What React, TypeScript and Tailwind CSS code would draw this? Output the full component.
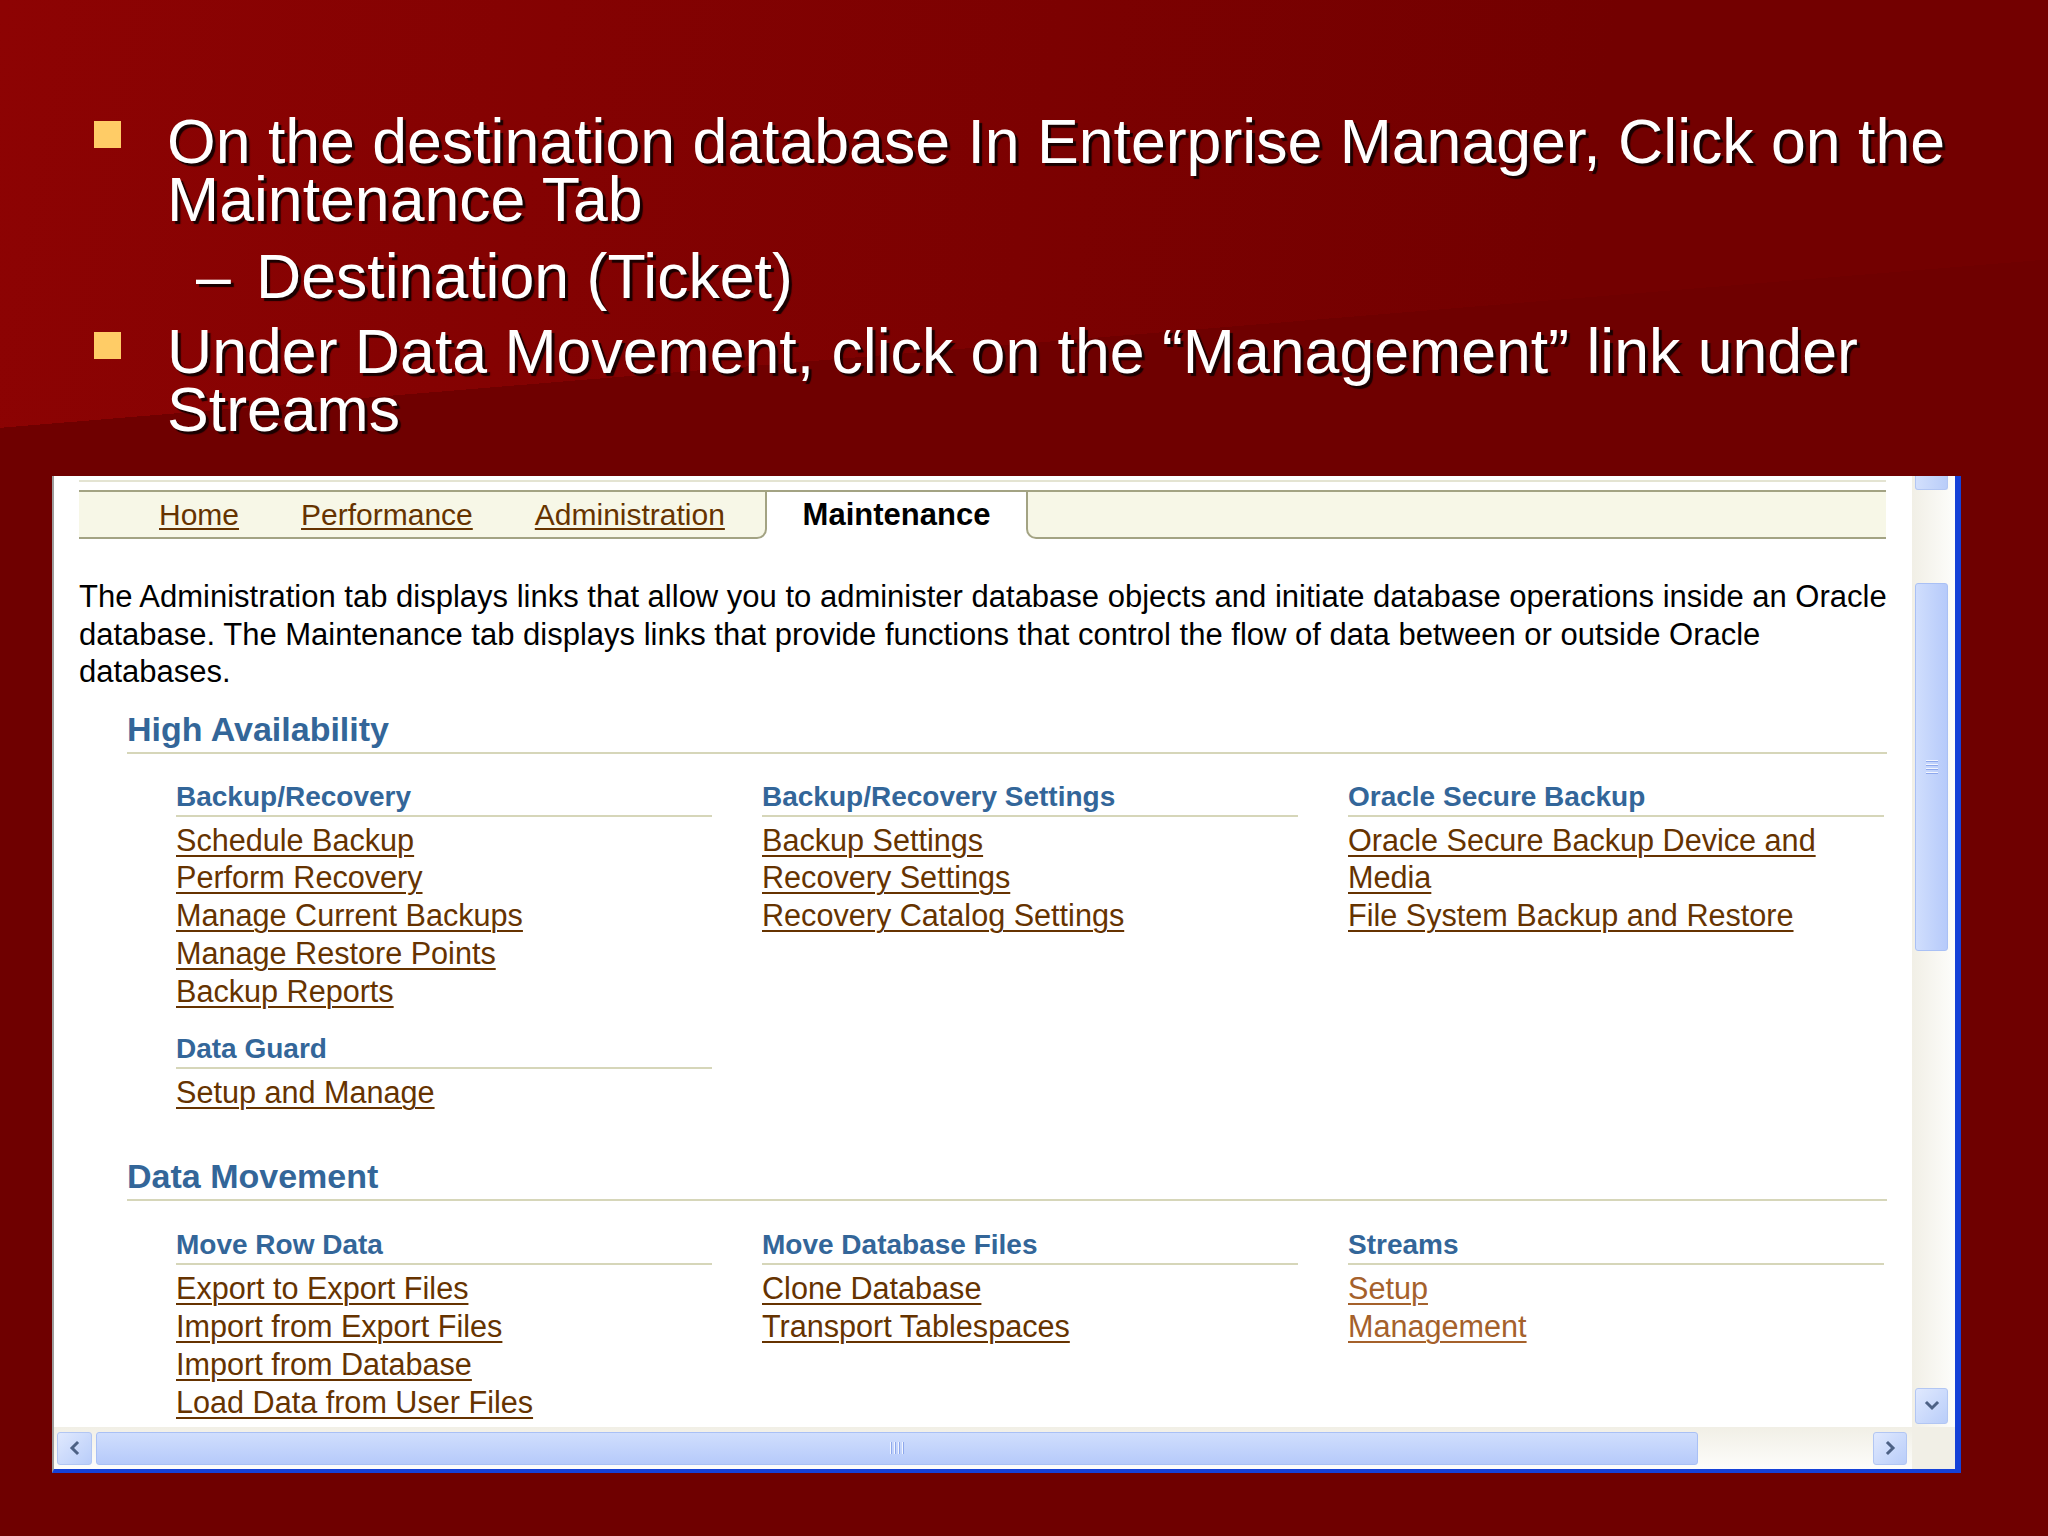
import React from 'react';

function Chevron({ dir }: { dir: 'up' | 'down' | 'left' | 'right' }) {
  const pts = {
    up: '3,10 8,5 13,10',
    down: '3,5 8,10 13,5',
    left: '10,3 5,8 10,13',
    right: '6,3 11,8 6,13',
  }[dir];
  return (
    <svg width="16" height="16" viewBox="0 0 16 16">
      <polyline points={pts} fill="none" stroke="#4d6185" strokeWidth="3" strokeLinecap="square" />
    </svg>
  );
}

function Lnk({ children, visited = false }: { children: React.ReactNode; visited?: boolean }) {
  return (
    <a
      href="#"
      className={`block w-fit underline decoration-2 underline-offset-[4px] ${visited ? 'text-[#a5612b]' : 'text-[#663300]'}`}
    >
      {children}
    </a>
  );
}

function Group({ title, children, className = '' }: { title: string; children: React.ReactNode; className?: string }) {
  return (
    <div className={`w-[536px] ${className}`}>
      <div className="text-[28px] leading-[28px] font-bold text-[#336699]">{title}</div>
      <div className="mt-[4px] h-[2px] bg-[#d6d6b9]" />
      <div className="mt-[5px] text-[30.6px] leading-[37.8px]">{children}</div>
    </div>
  );
}

function Section({ title, children, className = '' }: { title: string; children: React.ReactNode; className?: string }) {
  return (
    <div className={`ml-[73px] w-[1760px] ${className}`}>
      <div className="text-[34px] leading-[34px] font-bold text-[#336699]">{title}</div>
      <div className="mt-[6px] h-[2px] bg-[#d6d6b9]" />
      <div className="ml-[49px] flex gap-[50px] items-start">{children}</div>
    </div>
  );
}

function ThumbGrip({ vertical }: { vertical: boolean }) {
  return (
    <div className={vertical ? 'flex flex-col gap-[2px]' : 'flex gap-[2px]'}>
      {[0, 1, 2, 3].map((i) => (
        <div
          key={i}
          className={vertical ? 'w-[12px] h-[2px] bg-[#f2f5fe] border-b border-[#8ea8ec]' : 'w-[2px] h-[12px] bg-[#f2f5fe] border-r border-[#8ea8ec]'}
        />
      ))}
    </div>
  );
}

export default function App() {
  return (
    <div className="w-[2048px] h-[1536px] overflow-hidden bg-[#700000] bg-[linear-gradient(175.3deg,transparent_25.1%,#6f0000_25.1%),linear-gradient(100deg,#8d0303,#730000_70%)] font-['Liberation_Sans',Arial,sans-serif]">
      {/* slide bullets */}
      <div className="pt-[112px] pl-[94px] text-white text-[62.6px] leading-[58px] [text-shadow:3px_3px_1px_#1a0000]">
        <div className="flex">
          <div className="w-[27px] h-[27px] mt-[9px] bg-[#ffcc66] shrink-0" />
          <div className="ml-[46px] whitespace-nowrap">
            On the destination database In Enterprise Manager, Click on the
            <br />
            Maintenance Tab
          </div>
        </div>
        <div className="mt-[19px] flex pl-[102px] whitespace-nowrap">
          <span className="w-[60px]">–</span>
          <span>Destination (Ticket)</span>
        </div>
        <div className="mt-[17px] flex">
          <div className="w-[27px] h-[27px] mt-[10px] bg-[#ffcc66] shrink-0" />
          <div className="ml-[46px] whitespace-nowrap">
            Under Data Movement, click on the “Management” link under
            <br />
            Streams
          </div>
        </div>
      </div>

      {/* browser screenshot */}
      <div className="mt-[38px] ml-[52px] w-[1909px] h-[997px] bg-white border-l-2 border-l-[#9d9d9d] border-r-[6px] border-r-[#1541d8] border-b-4 border-b-[#1541d8] flex flex-col">
        <div className="h-[951px] flex">
          {/* page content */}
          <div className="w-[1858px] h-[951px] overflow-hidden">
            <div className="mt-[4px] ml-[25px] w-[1807px] h-[2px] bg-[#e4e4d2]" />
            <div className="mt-[8px] ml-[25px] w-[1807px] h-[49px] flex text-[30px]">
              <div className="w-[688px] shrink-0 bg-[#f7f7e7] border-t-2 border-b-2 border-r-2 border-[#a3a383] rounded-br-[10px] flex items-center pl-[80px] gap-[62px]">
                <a href="#" className="underline decoration-2 underline-offset-[3px] text-[#663300]">Home</a>
                <a href="#" className="underline decoration-2 underline-offset-[3px] text-[#663300]">Performance</a>
                <a href="#" className="underline decoration-2 underline-offset-[3px] text-[#663300]">Administration</a>
              </div>
              <div className="w-[259px] shrink-0 bg-white border-t-2 border-[#a3a383] flex items-center justify-center font-bold text-black text-[31px]">
                Maintenance
              </div>
              <div className="flex-1 bg-[#f7f7e7] border-t-2 border-b-2 border-l-2 border-[#a3a383] rounded-bl-[10px]" />
            </div>

            <div className="mt-[39px] ml-[25px] text-[31px] leading-[37.5px] text-black whitespace-nowrap">
              The Administration tab displays links that allow you to administer database objects and initiate database operations inside an Oracle
              <br />
              database. The Maintenance tab displays links that provide functions that control the flow of data between or outside Oracle
              <br />
              databases.
            </div>

            <Section title="High Availability" className="mt-[21px]">
              <div className="mt-[29px]">
                <Group title="Backup/Recovery">
                  <Lnk>Schedule Backup</Lnk>
                  <Lnk>Perform Recovery</Lnk>
                  <Lnk>Manage Current Backups</Lnk>
                  <Lnk>Manage Restore Points</Lnk>
                  <Lnk>Backup Reports</Lnk>
                </Group>
                <Group title="Data Guard" className="mt-[25px]">
                  <Lnk>Setup and Manage</Lnk>
                </Group>
              </div>
              <Group title="Backup/Recovery Settings" className="mt-[29px]">
                <Lnk>Backup Settings</Lnk>
                <Lnk>Recovery Settings</Lnk>
                <Lnk>Recovery Catalog Settings</Lnk>
              </Group>
              <Group title="Oracle Secure Backup" className="mt-[29px]">
                <Lnk>
                  Oracle Secure Backup Device and
                  <br />
                  Media
                </Lnk>
                <Lnk>File System Backup and Restore</Lnk>
              </Group>
            </Section>

            <Section title="Data Movement" className="mt-[47px]">
              <Group title="Move Row Data" className="mt-[30px]">
                <Lnk>Export to Export Files</Lnk>
                <Lnk>Import from Export Files</Lnk>
                <Lnk>Import from Database</Lnk>
                <Lnk>Load Data from User Files</Lnk>
              </Group>
              <Group title="Move Database Files" className="mt-[30px]">
                <Lnk>Clone Database</Lnk>
                <Lnk>Transport Tablespaces</Lnk>
              </Group>
              <Group title="Streams" className="mt-[30px]">
                <Lnk visited>Setup</Lnk>
                <Lnk visited>Management</Lnk>
              </Group>
            </Section>
          </div>

          {/* vertical scrollbar */}
          <div className="w-[43px] h-[951px] flex flex-col items-start pl-[3px] bg-gradient-to-r from-[#f1efe6] to-[#fdfdfb]">
            <div className="w-[33px] h-[14px] rounded-b-[3px] border border-t-0 border-[#b2c6f3] bg-gradient-to-r from-[#d3e0fd] to-[#b9cdf9]" />
            <div className="mt-[93px] w-[33px] h-[368px] rounded-[3px] border border-[#a9c0f5] bg-gradient-to-r from-[#d0defd] to-[#b6cafa] flex items-center justify-center">
              <ThumbGrip vertical />
            </div>
            <div className="mt-[437px] w-[33px] h-[36px] rounded-[3px] border border-[#b2c6f3] bg-gradient-to-br from-[#e0e9fe] to-[#b9cdf9] flex items-center justify-center">
              <Chevron dir="down" />
            </div>
          </div>
        </div>

        {/* horizontal scrollbar */}
        <div className="h-[42px] flex">
          <div className="w-[1858px] flex items-center pl-[3px] pr-[5px] bg-gradient-to-b from-[#f1efe6] to-[#fdfdfb]">
            <div className="w-[35px] h-[33px] rounded-[3px] border border-[#b2c6f3] bg-gradient-to-br from-[#e0e9fe] to-[#b9cdf9] flex items-center justify-center">
              <Chevron dir="left" />
            </div>
            <div className="ml-[4px] w-[1602px] h-[33px] rounded-[3px] border border-[#a9c0f5] bg-gradient-to-b from-[#d0defd] to-[#b6cafa] flex items-center justify-center">
              <ThumbGrip vertical={false} />
            </div>
            <div className="flex-1" />
            <div className="w-[34px] h-[33px] rounded-[3px] border border-[#b2c6f3] bg-gradient-to-br from-[#e0e9fe] to-[#b9cdf9] flex items-center justify-center">
              <Chevron dir="right" />
            </div>
          </div>
          <div className="w-[43px] bg-[#f1efe6]" />
        </div>
      </div>
    </div>
  );
}
